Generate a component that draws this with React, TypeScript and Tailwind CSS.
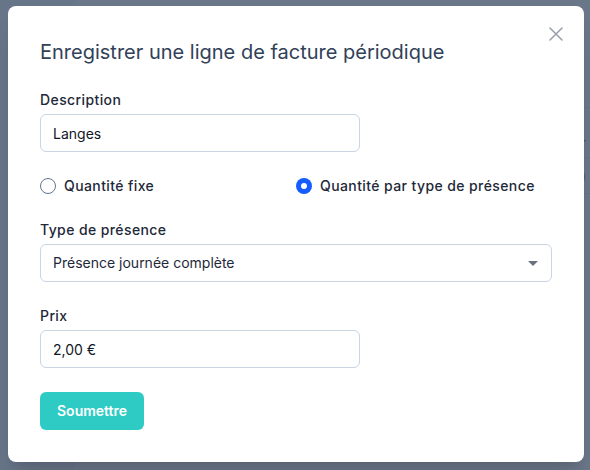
import { useState } from "react";

export default function App() {
  const [mode, setMode] = useState<"fixed" | "presence">("presence");
  const [description, setDescription] = useState("Langes");
  const [price, setPrice] = useState("2,00 €");

  return (
    <main
      className="relative h-[470px] w-[590px] overflow-hidden bg-white"
      style={{ fontFamily: "Inter, 'Noto Sans', sans-serif" }}
    >
      {/* Page behind the overlay */}
      <div className="flex h-full">
        <aside className="w-[75px] bg-slate-100" />
        <div className="flex-1 pt-[107px]">
          <div className="h-[50px] border-t border-gray-200 pr-1 text-right text-sm leading-[70px] text-gray-700">r</div>
          <div className="h-[36px] border-t border-gray-200 pr-1 text-right text-sm leading-[36px] text-gray-700">)</div>
          <div className="border-t border-gray-200" />
        </div>
      </div>

      {/* Overlay */}
      <div className="absolute inset-0 bg-slate-600/80" />

      {/* Modal */}
      <div className="absolute inset-0 flex items-start pl-2 pt-1.5">
        <div className="relative w-[576px] rounded-lg bg-white px-8 pb-8 pt-[32px] shadow-xl">
          <button type="button" className="absolute right-[21px] top-[21px] flex text-gray-400" aria-label="Fermer">
            <svg width="14" height="14" viewBox="0 0 14 14" fill="none" stroke="currentColor" strokeWidth="1.6" strokeLinecap="round">
              <path d="M1 1l12 12M13 1L1 13" />
            </svg>
          </button>

          <h2 className="mb-[24px] text-[20px] leading-7 font-normal text-slate-700">
            Enregistrer une ligne de facture périodique
          </h2>

          <form className="space-y-6" onSubmit={(e) => e.preventDefault()}>
            <div>
              <label className="mb-1 block text-sm leading-5 font-medium tracking-[0.4px] text-gray-800">Description</label>
              <input
                value={description}
                onChange={(e) => setDescription(e.target.value)}
                className="h-[38px] w-[320px] rounded-md border border-slate-300 px-3 text-sm text-gray-900 outline-none"
              />
            </div>

            <div className="grid grid-cols-2">
              <label className="flex items-center gap-2 text-sm leading-5 font-medium tracking-[0.4px] text-gray-800">
                <span
                  onClick={() => setMode("fixed")}
                  className={
                    mode === "fixed"
                      ? "flex h-4 w-4 items-center justify-center rounded-full bg-blue-600"
                      : "h-4 w-4 rounded-full border border-slate-500 bg-white"
                  }
                >
                  {mode === "fixed" && <span className="h-1.5 w-1.5 rounded-full bg-white" />}
                </span>
                Quantité fixe
              </label>
              <label className="flex items-center gap-2 text-sm leading-5 font-medium tracking-[0.4px] text-gray-800">
                <span
                  onClick={() => setMode("presence")}
                  className={
                    mode === "presence"
                      ? "flex h-4 w-4 items-center justify-center rounded-full bg-blue-600"
                      : "h-4 w-4 rounded-full border border-slate-500 bg-white"
                  }
                >
                  {mode === "presence" && <span className="h-1.5 w-1.5 rounded-full bg-white" />}
                </span>
                Quantité par type de présence
              </label>
            </div>

            <div>
              <label className="mb-1 block text-sm leading-5 font-medium tracking-[0.4px] text-gray-800">Type de présence</label>
              <div className="flex h-[38px] w-full items-center justify-between rounded-md border border-slate-300 pl-3 pr-[13px] text-sm text-gray-800">
                <span>Présence journée complète</span>
                <svg width="10" height="5" viewBox="0 0 10 5" className="text-gray-500">
                  <path d="M0 0h10L5 5z" fill="currentColor" />
                </svg>
              </div>
            </div>

            <div>
              <label className="mb-1 block text-sm leading-5 font-medium tracking-[0.4px] text-gray-800">Prix</label>
              <input
                value={price}
                onChange={(e) => setPrice(e.target.value)}
                className="h-[38px] w-[320px] rounded-md border border-slate-300 px-3 text-sm text-gray-900 outline-none"
              />
            </div>

            <button
              type="submit"
              className="h-[38px] rounded-md bg-[#2ecbc4] px-[17px] text-sm font-semibold text-white"
            >
              Soumettre
            </button>
          </form>
        </div>
      </div>
    </main>
  );
}
